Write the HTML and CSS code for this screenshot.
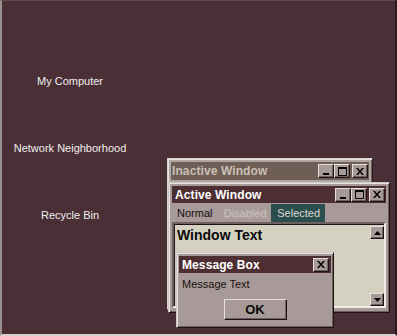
FILE: index.html
```html
<!DOCTYPE html>
<html>
<head>
<meta charset="utf-8">
<link rel="stylesheet" href="styles.css">
</head>
<body>
<div class="desktop">
  <div class="icons">
    <div class="icon">My Computer</div>
    <div class="icon">Network Neighborhood</div>
    <div class="icon">Recycle Bin</div>
  </div>

  <div class="win inactive">
    <div class="title">
      <span class="caption">Inactive Window</span>
      <div class="tbtns">
        <div class="tbtn"><svg width="8" height="8" viewBox="0 0 8 8"><rect x="1" y="6" width="6" height="2" fill="#000"/></svg></div>
        <div class="tbtn"><svg width="9" height="9" viewBox="0 0 9 9"><path d="M0.5 1.5h8v7h-8z" fill="none" stroke="#000"/><rect x="0" y="0" width="9" height="2" fill="#000"/></svg></div>
        <div class="tbtn close"><svg width="8" height="7" viewBox="0 0 8 7"><path d="M0 0h2l2 2.5 2-2.5h2l-3 3.5 3 3.5h-2l-2-2.5-2 2.5h-2l3-3.5z" fill="#000"/></svg></div>
      </div>
    </div>
  </div>

  <div class="win active">
    <div class="title">
      <span class="caption">Active Window</span>
      <div class="tbtns">
        <div class="tbtn"><svg width="8" height="8" viewBox="0 0 8 8"><rect x="1" y="6" width="6" height="2" fill="#000"/></svg></div>
        <div class="tbtn"><svg width="9" height="9" viewBox="0 0 9 9"><path d="M0.5 1.5h8v7h-8z" fill="none" stroke="#000"/><rect x="0" y="0" width="9" height="2" fill="#000"/></svg></div>
        <div class="tbtn close"><svg width="8" height="7" viewBox="0 0 8 7"><path d="M0 0h2l2 2.5 2-2.5h2l-3 3.5 3 3.5h-2l-2-2.5-2 2.5h-2l3-3.5z" fill="#000"/></svg></div>
      </div>
    </div>
    <div class="menu">
      <span class="mi">Normal</span>
      <span class="mi disabled">Disabled</span>
      <span class="mi selected">Selected</span>
    </div>
    <div class="client">
      <div class="wtext">Window Text</div>
      <div class="scroll">
        <div class="sbtn"><svg width="7" height="4" viewBox="0 0 7 4"><path d="M3.5 0L7 4H0z" fill="#000"/></svg></div>
        <div class="sbtn"><svg width="7" height="4" viewBox="0 0 7 4"><path d="M0 0h7L3.5 4z" fill="#000"/></svg></div>
      </div>
    </div>
  </div>

  <div class="win msg">
    <div class="title">
      <span class="caption">Message Box</span>
      <div class="tbtns">
        <div class="tbtn close"><svg width="8" height="7" viewBox="0 0 8 7"><path d="M0 0h2l2 2.5 2-2.5h2l-3 3.5 3 3.5h-2l-2-2.5-2 2.5h-2l3-3.5z" fill="#000"/></svg></div>
      </div>
    </div>
    <div class="msgtext">Message Text</div>
    <div class="okrow"><div class="ok">OK</div></div>
  </div>
</div>
</body>
</html>
```

FILE: styles.css
```css
* { box-sizing: border-box; }
html, body { margin: 0; padding: 0; }
body { width: 397px; height: 336px; overflow: hidden; background: #4a3036; }

.desktop {
  position: relative;
  width: 397px;
  height: 336px;
  background: #4a3036;
  border-left: 2px solid #9a9090;
  border-top: 1px solid #5e474b;
  border-right: 2px solid #2a1a1e;
  border-bottom: 2px solid #d8d0cc;
  font-family: "Liberation Sans", Arial, sans-serif;
  font-size: 11px;
}

.icons {
  display: flex;
  flex-direction: column;
  width: 136px;
  padding-top: 74px;
  gap: 54px;
}
.icon {
  color: #f2eeee;
  text-align: center;
  line-height: 13px;
  height: 13px;
}

.win {
  position: absolute;
  background: #a89a98;
  border: 1px solid;
  border-color: #cfc7c4 #1e1214 #1e1214 #cfc7c4;
  box-shadow: inset 1px 1px 0 #e8e2e0, inset -1px -1px 0 #6e6060;
  padding: 3px;
  display: flex;
  flex-direction: column;
}

.title {
  height: 17px;
  display: flex;
  align-items: center;
  justify-content: space-between;
  padding: 0 1px 0 2px;
  background: #4c2e33;
}
.caption {
  font-weight: bold;
  font-size: 12px;
  color: #ffffff;
  letter-spacing: 0.1px;
}

.tbtns { display: flex; gap: 0; }
.tbtn {
  width: 16px;
  height: 14px;
  background: #a89a98;
  border: 1px solid;
  border-color: #e6dfdc #1e1214 #1e1214 #e6dfdc;
  box-shadow: inset -1px -1px 0 #6e6060;
  display: flex;
  align-items: center;
  justify-content: center;
}
.tbtn.close { margin-left: 2px; }

.inactive {
  left: 165px;
  top: 157px;
  width: 206px;
  height: 152px;
  background: #b0a6a2;
  border-color: #d8d2cc #2a1a1e #2a1a1e #d8d2cc;
}
.inactive .title { background: #6f5e55; height: 18px; padding-left: 1px; }
.inactive .caption { color: #c9c0b6; }

.active {
  left: 166px;
  top: 181px;
  width: 222px;
  height: 131px;
  padding: 3px 3px 4px 3px;
}
.active .title { padding-left: 3px; }

.menu {
  display: flex;
  align-items: stretch;
  height: 18px;
  margin-top: 1px;
  color: #101010;
}
.mi {
  padding: 0 5px;
  line-height: 18px;
  font-size: 11px;
}
.mi.disabled { color: #c6bcb8; text-shadow: 1px 1px 0 #b8aeab; padding: 0 5px 0 6px; }
.mi.selected { background: #2a4e4e; color: #dcd6d0; padding: 0 5px 0 6px; }

.client {
  flex: 1;
  position: relative;
  background: #d4d1c0;
  border: 2px solid;
  border-color: #6e6060 #f0ece8 #f0ece8 #6e6060;
  box-shadow: inset 1px 1px 0 #1e1214;
  display: flex;
  justify-content: space-between;
}
.wtext {
  font-weight: bold;
  font-size: 14px;
  color: #0a0a0a;
  padding: 3px 0 0 3px;
  line-height: 16px;
}
.scroll {
  display: flex;
  flex-direction: column;
  justify-content: space-between;
  padding: 2px 0 0 0;
}
.sbtn {
  width: 14px;
  height: 13px;
  background: #a89a98;
  border: 1px solid;
  border-color: #e6dfdc #1e1214 #1e1214 #e6dfdc;
  box-shadow: inset -1px -1px 0 #6e6060;
  display: flex;
  align-items: center;
  justify-content: center;
}

.msg {
  left: 174px;
  top: 251px;
  width: 158px;
  height: 76px;
  padding: 3px 2px 3px 2px;
}
.msg .title { height: 17px; padding-left: 3px; padding-right: 2px; }
.msgtext {
  color: #181010;
  font-size: 11px;
  padding: 4px 0 0 3px;
  line-height: 14px;
}
.okrow {
  display: flex;
  justify-content: center;
  margin-top: 8px;
}
.ok {
  width: 63px;
  height: 21px;
  background: #a89a98;
  border: 1px solid;
  border-color: #e6dfdc #1e1214 #1e1214 #e6dfdc;
  box-shadow: inset -1px -1px 0 #6e6060;
  display: flex;
  align-items: center;
  justify-content: center;
  font-weight: bold;
  font-size: 13px;
  color: #0a0a0a;
}
```
